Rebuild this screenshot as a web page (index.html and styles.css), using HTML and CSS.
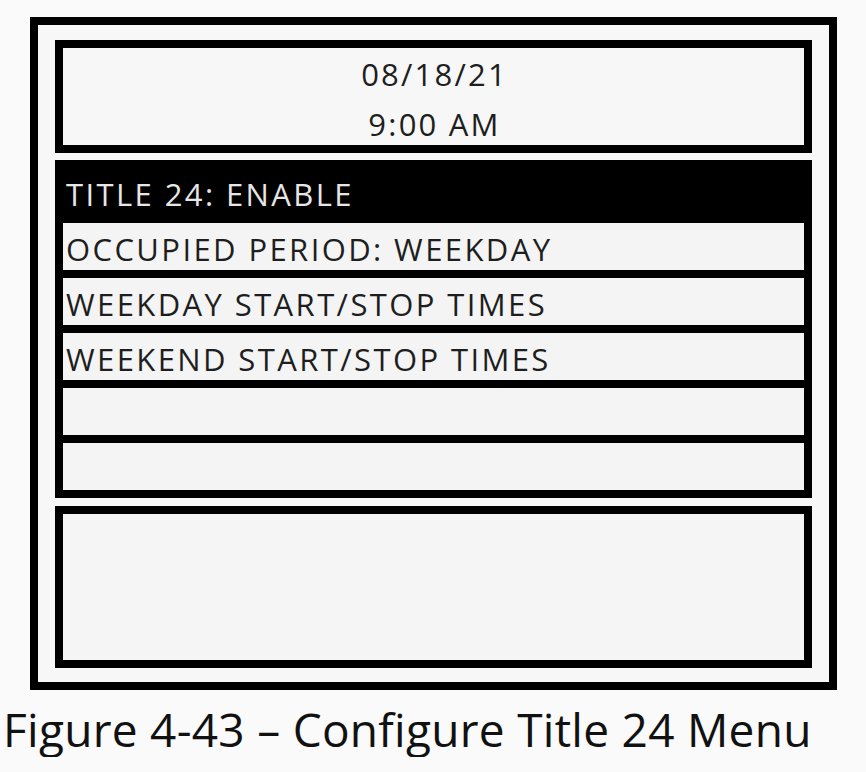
FILE: index.html
```html
<!DOCTYPE html>
<html lang="en">
<head>
<meta charset="utf-8">
<title>Configure Title 24 Menu</title>
<link rel="stylesheet" href="styles.css">
</head>
<body>
<div class="frame">
  <div class="header">
    <div class="line">08/18/21</div>
    <div class="line">9:00 AM</div>
  </div>
  <div class="menu">
    <div class="row selected">TITLE 24: ENABLE</div>
    <div class="row">OCCUPIED PERIOD: WEEKDAY</div>
    <div class="row">WEEKDAY START/STOP TIMES</div>
    <div class="row">WEEKEND START/STOP TIMES</div>
    <div class="row"></div>
    <div class="row"></div>
  </div>
  <div class="footer"></div>
</div>
<div class="caption">Figure 4-43 – Configure Title 24 Menu</div>
</body>
</html>
```
FILE: styles.css
```css
html, body {
  margin: 0;
  padding: 0;
  background: #fafafa;
}
body {
  font-family: "Open Sans", "DejaVu Sans", sans-serif;
  color: #222;
}
.frame {
  box-sizing: border-box;
  width: 807px;
  margin: 17px 0 0 30px;
  border: 8px solid #000;
  padding: 15px 17px 14px 17px;
  display: flex;
  flex-direction: column;
  gap: 7px;
  background: #f7f7f7;
}
.header {
  box-sizing: border-box;
  height: 113px;
  border: 8px solid #000;
  padding-top: 1px;
  padding-left: 2px;
  text-align: center;
  font-size: 31px;
  line-height: 50px;
  letter-spacing: 2.2px;
  color: #1e1e1e;
}
.menu {
  border: 8px solid #000;
  display: flex;
  flex-direction: column;
  gap: 8px;
  background: #000;
}
.row {
  height: 47px;
  background: #f4f4f4;
  font-size: 31px;
  line-height: 52px;
  letter-spacing: 2.4px;
  padding-left: 3px;
  white-space: nowrap;
  overflow: hidden;
  color: #1e1e1e;
}
.row.selected {
  background: #000;
  color: #e6e6e6;
}
.footer {
  box-sizing: border-box;
  height: 162px;
  margin-top: 1px;
  border: 8px solid #000;
  background: #f5f5f5;
}
.caption {
  margin: 11px 0 0 3px;
  font-size: 46px;
  line-height: 56px;
  letter-spacing: 0.28px;
  color: #111;
  white-space: nowrap;
}
```
